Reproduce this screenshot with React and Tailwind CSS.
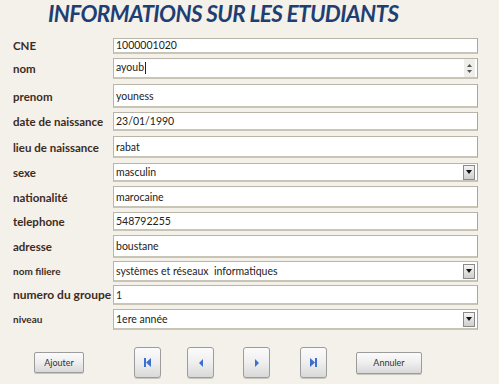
import React from 'react'

const rows = [
  { label: 'CNE', value: '1000001020', h: 'h-[16px]', mt: 'mt-0' },
  { label: 'nom', value: 'ayoub', h: 'h-[21px]', mt: 'mt-[4px]', spin: true, caret: true },
  { label: 'prenom', value: 'youness', h: 'h-[24px]', mt: 'mt-[5px]' },
  { label: 'date de naissance', value: '23/01/1990', h: 'h-[19px]', mt: 'mt-[4px]' },
  { label: 'lieu de naissance', value: 'rabat', h: 'h-[22px]', mt: 'mt-[5px]' },
  { label: 'sexe', value: 'masculin', h: 'h-[19px]', mt: 'mt-[5px]', drop: true },
  { label: 'nationalité', value: 'marocaine', h: 'h-[22px]', mt: 'mt-[4px]' },
  { label: 'telephone', value: '548792255', h: 'h-[19px]', mt: 'mt-[4px]' },
  { label: 'adresse', value: 'boustane', h: 'h-[23px]', mt: 'mt-[4px]' },
  { label: 'nom filiere', value: 'systèmes et réseaux  informatiques', h: 'h-[21px]', mt: 'mt-[3px]', drop: true, small: true },
  { label: 'numero du groupe', value: '1', h: 'h-[20px]', mt: 'mt-[3px]', big: true },
  { label: 'niveau', value: '1ere année', h: 'h-[21px]', mt: 'mt-[4px]', drop: true, small: true },
]

function DropBtn() {
  return (
    <div className="w-[12px] h-[15px] mr-[2px] border border-[#8a8a8a] bg-gradient-to-b from-[#f4f4f4] to-[#cfcfcf] flex items-center justify-center">
      <svg width="6" height="4" viewBox="0 0 6 4"><path d="M0 0h6L3 4z" fill="#111" /></svg>
    </div>
  )
}

function Spin() {
  return (
    <div className="w-[11px] h-full mr-[2px] flex flex-col items-center justify-center gap-[3px] bg-[#eeeeea]">
      <svg width="5" height="3" viewBox="0 0 5 3"><path d="M0 3h5L2.5 0z" fill="#555" /></svg>
      <svg width="5" height="3" viewBox="0 0 5 3"><path d="M0 0h5L2.5 3z" fill="#555" /></svg>
    </div>
  )
}

function NavBtn({ children }) {
  return (
    <button className="w-[27px] h-[31px] rounded-[3px] border border-[#9c9c9c] bg-gradient-to-b from-[#fbfbfb] via-[#efefef] to-[#d9d9d9] flex items-center justify-center shadow-[0_1px_0_#c8c6bd]">
      {children}
    </button>
  )
}

export default function App() {
  return (
    <div className="w-[499px] h-[384px] bg-[#f3f1ea] overflow-hidden" style={{ fontFamily: 'Lato, "Open Sans", sans-serif' }}>
      <h1 className="ml-[48px] h-[30px] text-[22.5px] leading-[28px] font-bold italic text-[#1f3f73] tracking-[-0.6px]">
        INFORMATIONS SUR LES ETUDIANTS
      </h1>

      <div className="mt-[7px] flex flex-col">
        {rows.map((r) => (
          <div key={r.label} className={`flex items-center ${r.mt}`}>
            <div className={`w-[100px] ml-[13px] whitespace-nowrap overflow-hidden font-bold text-[#3d2b1f] ${r.small ? 'text-[10px]' : r.big ? 'text-[12px]' : 'text-[11.5px]'}`}>
              {r.label}
            </div>
            <div className={`w-[365px] ${r.h} bg-white border border-[#b9b6a9] border-r-[#a9a698] border-b-2 border-b-[#c9c5b6] flex items-center`}>
              <span className="flex-1 pl-[2px] text-[10.5px] text-[#222] whitespace-pre leading-none">
                {r.value}
                {r.caret && <span className="inline-block w-[1px] h-[12px] bg-[#222] align-middle ml-[1px]" />}
              </span>
              {r.drop && <DropBtn />}
              {r.spin && <Spin />}
            </div>
          </div>
        ))}
      </div>

      <div className="mt-[17px] flex items-center">
        <button className="ml-[34px] w-[50px] h-[21px] rounded-[2px] border border-[#9c9c9c] bg-gradient-to-b from-[#fbfbfb] via-[#eeeeee] to-[#d8d8d8] text-[9px] text-[#333] shadow-[0_1px_0_#c8c6bd]">
          Ajouter
        </button>
        <div className="ml-[50px]">
          <NavBtn>
            <svg width="7" height="9" viewBox="0 0 7 9"><rect x="0" y="0" width="2" height="9" fill="#3b6fd0" /><path d="M7 0v9L2 4.5z" fill="#3b6fd0" /></svg>
          </NavBtn>
        </div>
        <div className="ml-[26px]">
          <NavBtn>
            <svg width="4" height="8" viewBox="0 0 4 8"><path d="M4 0v8L0 4z" fill="#3b6fd0" /></svg>
          </NavBtn>
        </div>
        <div className="ml-[29px]">
          <NavBtn>
            <svg width="4" height="8" viewBox="0 0 4 8"><path d="M0 0v8l4-4z" fill="#3b6fd0" /></svg>
          </NavBtn>
        </div>
        <div className="ml-[30px]">
          <NavBtn>
            <svg width="7" height="9" viewBox="0 0 7 9"><path d="M0 0v9l5-4.5z" fill="#3b6fd0" /><rect x="5" y="0" width="2" height="9" fill="#3b6fd0" /></svg>
          </NavBtn>
        </div>
        <button className="ml-[29px] w-[66px] h-[22px] rounded-[2px] border border-[#9c9c9c] bg-gradient-to-b from-[#fbfbfb] via-[#eeeeee] to-[#d8d8d8] text-[9px] text-[#333] shadow-[0_1px_0_#c8c6bd]">
          Annuler
        </button>
      </div>
    </div>
  )
}
